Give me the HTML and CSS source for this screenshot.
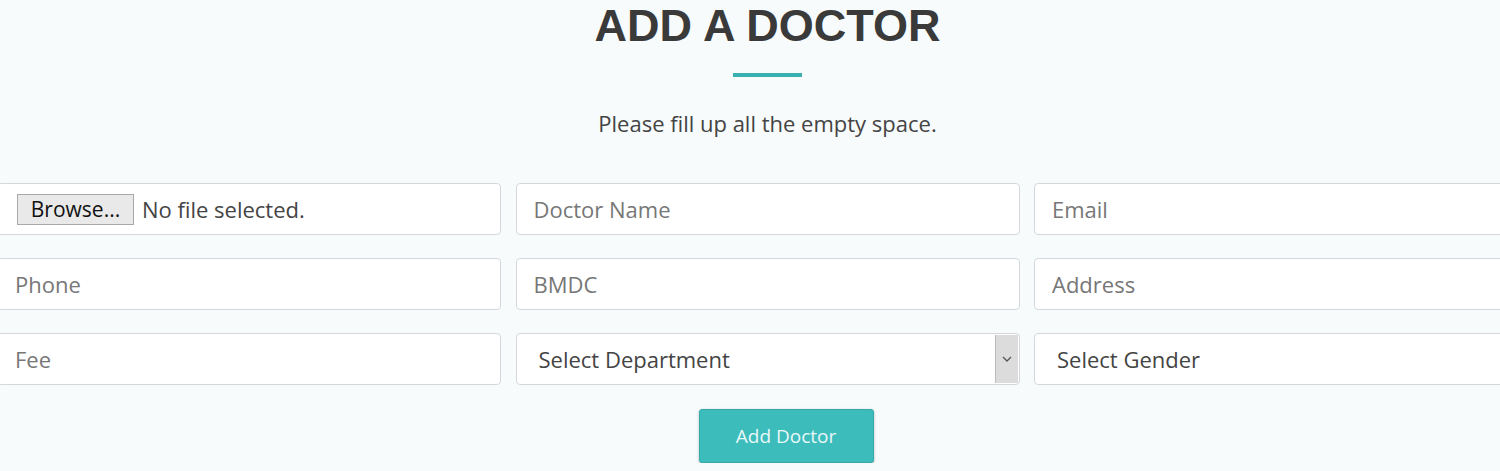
FILE: index.html
```html
<!DOCTYPE html>
<html lang="en">
<head>
  <meta charset="UTF-8">
  <meta name="viewport" content="width=device-width, initial-scale=1.0">
  <title>Add a Doctor</title>
  <link rel="stylesheet" href="styles.css">
</head>
<body>
  <section class="add-doctor">
    <h1 class="title">ADD A DOCTOR</h1>
    <div class="title-line"></div>
    <p class="subtitle">Please fill up all the empty space.</p>

    <form class="doctor-form">
      <div class="fields">
        <label class="field file-field">
          <span class="browse-btn">Browse...</span>
          <span class="file-name">No file selected.</span>
        </label>
        <input class="field" type="text" placeholder="Doctor Name">
        <input class="field" type="email" placeholder="Email">

        <input class="field" type="text" placeholder="Phone">
        <input class="field" type="text" placeholder="BMDC">
        <input class="field" type="text" placeholder="Address">

        <input class="field" type="text" placeholder="Fee">
        <div class="select-wrap">
          <select class="field select">
            <option>Select Department</option>
          </select>
          <span class="select-arrow">
            <svg width="10" height="6" viewBox="0 0 10 6"><path d="M1 1l4 4 4-4" fill="none" stroke="#555" stroke-width="1.3"/></svg>
          </span>
        </div>
        <select class="field select">
          <option>Select Gender</option>
        </select>
      </div>

      <div class="actions">
        <button type="button" class="submit-btn">Add Doctor</button>
      </div>
    </form>
  </section>
</body>
</html>
```
FILE: styles.css
```css
* {
  margin: 0;
  padding: 0;
  box-sizing: border-box;
}

body {
  background: #f7fbfc;
  font-family: "Open Sans", Arial, sans-serif;
  overflow: hidden;
}

.add-doctor {
  width: 1541px;
  margin-left: -3px;
  text-align: center;
}

.title {
  font-family: "Liberation Sans", Arial, sans-serif;
  font-size: 45px;
  font-weight: bold;
  color: #3a3a3a;
  line-height: 52px;
}

.title-line {
  width: 69px;
  height: 4px;
  background: #3ab0b0;
  margin: 21px auto 0;
}

.subtitle {
  font-size: 22px;
  color: #444;
  line-height: 30px;
  margin-top: 31px;
}

.doctor-form {
  margin-top: 45px;
}

.fields {
  display: grid;
  grid-template-columns: repeat(3, 504px);
  column-gap: 14.5px;
  row-gap: 23px;
}

.field {
  width: 100%;
  height: 52px;
  background: #fff;
  border: 1px solid #d4d8da;
  border-radius: 4px;
  padding: 0 17px;
  font-family: "Open Sans", Arial, sans-serif;
  font-size: 22px;
  color: #444;
  text-align: left;
  outline: none;
}

.field::placeholder {
  color: #777;
}

.file-field {
  display: flex;
  align-items: center;
  padding-left: 19px;
}

.browse-btn {
  display: inline-block;
  width: 117px;
  height: 31px;
  line-height: 29px;
  text-align: center;
  background: #e9e9e9;
  border: 1px solid #a9a9a9;
  font-size: 21px;
  color: #111;
}

.file-name {
  margin-left: 8px;
  font-size: 22px;
  color: #444;
}

.select-wrap {
  position: relative;
}

.select {
  appearance: none;
  -webkit-appearance: none;
  padding-left: 22px;
  color: #444;
}

.select-arrow {
  position: absolute;
  top: 2px;
  right: 2px;
  width: 23px;
  height: 48px;
  background: #dcdcdc;
  border-left: 1px solid #bbb;
  display: flex;
  align-items: center;
  justify-content: center;
}

.actions {
  display: flex;
  justify-content: center;
  margin-top: 24px;
}

.submit-btn {
  width: 175px;
  height: 54px;
  margin-left: 37px;
  background: #3dbcbc;
  border: 1px solid #35a9a9;
  border-radius: 3px;
  box-shadow: 0 1px 3px rgba(0, 0, 0, 0.25);
  color: #e9f8f8;
  font-family: "Open Sans", Arial, sans-serif;
  font-size: 19px;
  cursor: pointer;
}
```
